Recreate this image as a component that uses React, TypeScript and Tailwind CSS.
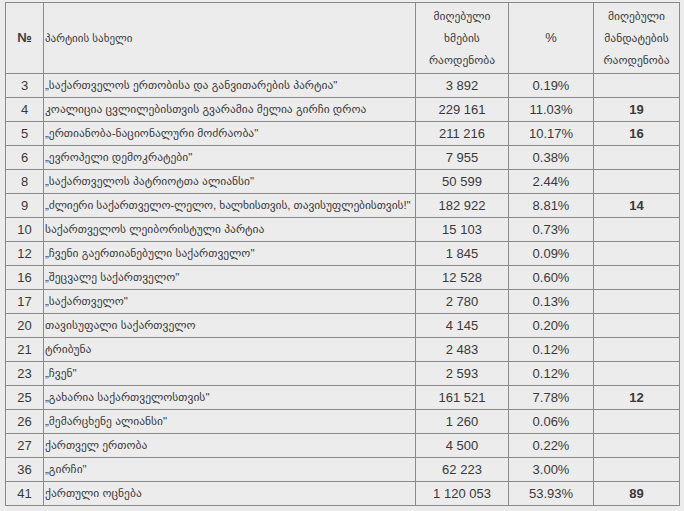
import React from 'react';

type Row = { n: number; name: string; votes: string; pct: string; seats?: string; tight?: boolean };

const rows: Row[] = [
  { n: 3, name: '„საქართველოს ერთობისა და განვითარების პარტია"', votes: '3 892', pct: '0.19%' },
  { n: 4, name: 'კოალიცია ცვლილებისთვის გვარამია მელია გირჩი დროა', votes: '229 161', pct: '11.03%', seats: '19' },
  { n: 5, name: '„ერთიანობა-ნაციონალური მოძრაობა"', votes: '211 216', pct: '10.17%', seats: '16' },
  { n: 6, name: '„ევროპელი დემოკრატები"', votes: '7 955', pct: '0.38%' },
  { n: 8, name: '„საქართველოს პატრიოტთა ალიანსი"', votes: '50 599', pct: '2.44%' },
  { n: 9, name: '„ძლიერი საქართველო-ლელო, ხალხისთვის, თავისუფლებისთვის!"', votes: '182 922', pct: '8.81%', seats: '14', tight: true },
  { n: 10, name: 'საქართველოს ლეიბორისტული პარტია', votes: '15 103', pct: '0.73%' },
  { n: 12, name: '„ჩვენი გაერთიანებული საქართველო"', votes: '1 845', pct: '0.09%' },
  { n: 16, name: '„შეცვალე საქართველო"', votes: '12 528', pct: '0.60%' },
  { n: 17, name: '„საქართველო"', votes: '2 780', pct: '0.13%' },
  { n: 20, name: 'თავისუფალი საქართველო', votes: '4 145', pct: '0.20%' },
  { n: 21, name: 'ტრიბუნა', votes: '2 483', pct: '0.12%' },
  { n: 23, name: '„ჩვენ"', votes: '2 593', pct: '0.12%' },
  { n: 25, name: '„გახარია საქართველოსთვის"', votes: '161 521', pct: '7.78%', seats: '12' },
  { n: 26, name: '„მემარცხენე ალიანსი"', votes: '1 260', pct: '0.06%' },
  { n: 27, name: 'ქართველ ერთობა', votes: '4 500', pct: '0.22%' },
  { n: 36, name: '„გირჩი"', votes: '62 223', pct: '3.00%' },
  { n: 41, name: 'ქართული ოცნება', votes: '1 120 053', pct: '53.93%', seats: '89' },
];

export default function App() {
  return (
    <div className="w-[684px] h-[511px] bg-[#ececec] pt-[2px] pl-[5px] text-[13px] text-[#3a3a3a] font-['Liberation_Sans','DejaVu_Sans',sans-serif]">
      <table className="border-collapse table-fixed w-[674px]">
        <colgroup>
          <col className="w-[38px]" />
          <col className="w-[372px]" />
          <col className="w-[93px]" />
          <col className="w-[85px]" />
          <col className="w-[86px]" />
        </colgroup>
        <thead>
          <tr className="h-[71px]">
            <th className="border border-[#8a8a8a] text-center font-bold p-0">№</th>
            <th className="border border-[#8a8a8a] text-left font-normal pl-px text-[11px]">პარტიის სახელი</th>
            <th className="border border-[#8a8a8a] font-normal text-[11.5px] leading-[22px] p-0">
              მიღებული<br />ხმების<br />რაოდენობა
            </th>
            <th className="border border-[#8a8a8a] font-normal p-0">%</th>
            <th className="border border-[#8a8a8a] font-normal text-[11.5px] leading-[22px] p-0">
              მიღებული<br />მანდატების<br />რაოდენობა
            </th>
          </tr>
        </thead>
        <tbody>
          {rows.map(r => (
            <tr key={r.n} className="h-[24px]">
              <td className="border border-[#8a8a8a] text-center p-0">{r.n}</td>
              <td
                className={
                  r.tight
                    ? 'border border-[#8a8a8a] pl-px p-0 text-[11.5px] tracking-[-0.1px] whitespace-nowrap overflow-hidden'
                    : 'border border-[#8a8a8a] pl-px p-0 text-[11.5px] whitespace-nowrap overflow-hidden'
                }
              >
                {r.name}
              </td>
              <td className="border border-[#8a8a8a] text-center p-0">{r.votes}</td>
              <td className="border border-[#8a8a8a] text-center p-0">{r.pct}</td>
              <td className="border border-[#8a8a8a] text-center p-0 font-bold">{r.seats ?? ''}</td>
            </tr>
          ))}
        </tbody>
      </table>
    </div>
  );
}
